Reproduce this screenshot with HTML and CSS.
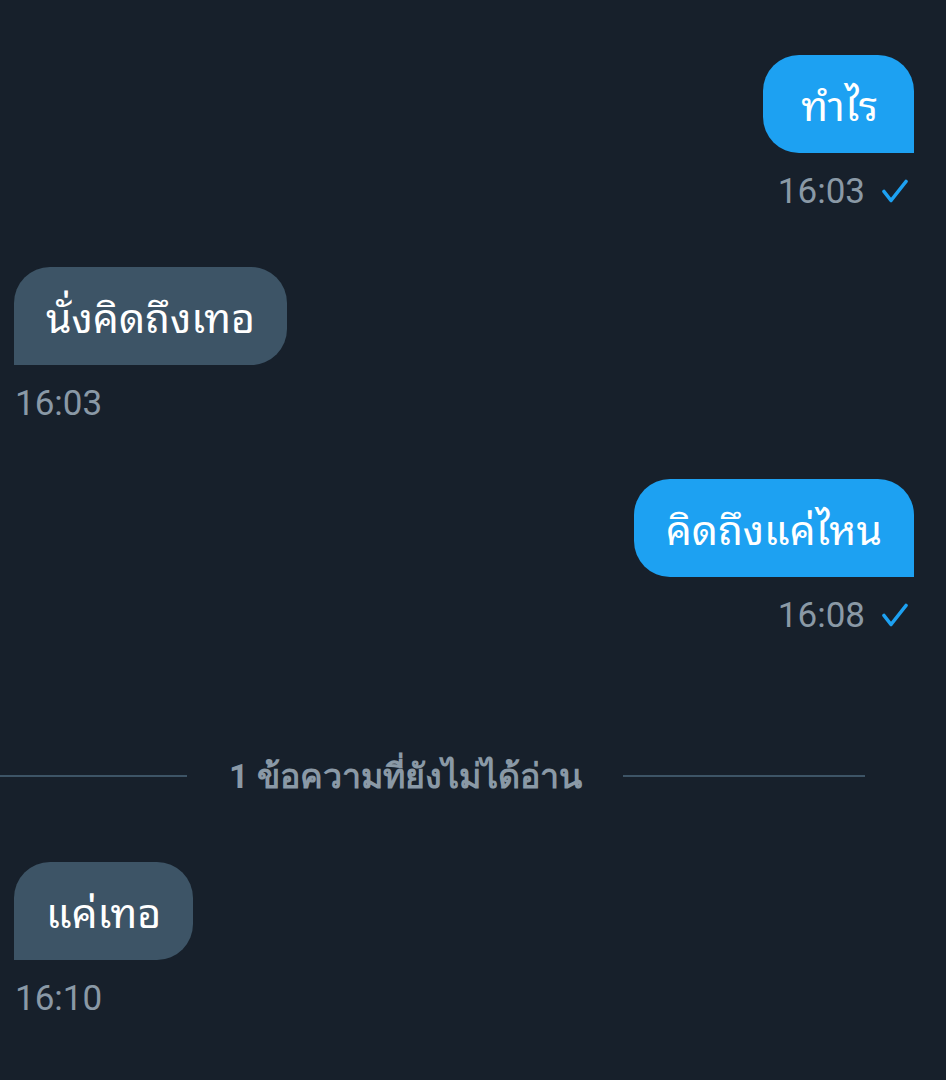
FILE: index.html
```html
<!DOCTYPE html>
<html lang="th">
<head>
<meta charset="utf-8">
<link rel="stylesheet" href="styles.css">
</head>
<body>
<main class="chat">
  <div class="msg sent first">
    <div class="bubble">ทำไร</div>
    <div class="meta"><span class="time">16:03</span><svg class="check" viewBox="0 0 28 26" width="28" height="26"><path d="M3 12.5 L10 21.5 L25 2.5" fill="none" stroke="#1da1f2" stroke-width="3.6" stroke-linecap="round" stroke-linejoin="round"/></svg></div>
  </div>
  <div class="msg recv">
    <div class="bubble">นั่งคิดถึงเทอ</div>
    <div class="meta"><span class="time">16:03</span></div>
  </div>
  <div class="msg sent">
    <div class="bubble">คิดถึงแค่ไหน</div>
    <div class="meta"><span class="time">16:08</span><svg class="check" viewBox="0 0 28 26" width="28" height="26"><path d="M3 12.5 L10 21.5 L25 2.5" fill="none" stroke="#1da1f2" stroke-width="3.6" stroke-linecap="round" stroke-linejoin="round"/></svg></div>
  </div>
  <div class="divider">
    <span class="line left"></span>
    <span class="label">1 ข้อความที่ยังไม่ได้อ่าน</span>
    <span class="line right"></span>
  </div>
  <div class="msg recv last">
    <div class="bubble">แค่เทอ</div>
    <div class="meta"><span class="time">16:10</span></div>
  </div>
</main>
</body>
</html>
```
FILE: styles.css
```css
html, body {
  margin: 0;
  padding: 0;
  background: #17202b;
}
body {
  width: 946px;
  height: 1080px;
  overflow: hidden;
  font-family: "Roboto", "Noto Sans", sans-serif;
}
.chat {
  display: flex;
  flex-direction: column;
  padding: 55px 32px 0 14px;
}
.msg {
  display: flex;
  flex-direction: column;
}
.msg.sent { align-items: flex-end; }
.msg.recv { align-items: flex-start; margin-top: 55px; }
.msg.sent:not(.first) { margin-top: 55px; }
.bubble {
  height: 98px;
  box-sizing: border-box;
  display: flex;
  align-items: center;
  padding: 0 32px 4px;
  font-family: "Noto Sans Thai Looped", "Loma", "Garuda", "Roboto", "Noto Sans", sans-serif;
  font-size: 41px;
  color: #ffffff;
  border-radius: 36px;
}
.sent.first .bubble { padding: 0 36px 4px 38px; }
.sent .bubble {
  background: #1da1f2;
  border-bottom-right-radius: 0;
}
.recv .bubble {
  background: #3d5466;
  border-bottom-left-radius: 0;
}
.meta {
  display: flex;
  align-items: center;
  gap: 16px;
  height: 40px;
  margin-top: 19px;
}
.sent .meta { margin-right: 5px; }
.recv .meta { margin-left: 1px; }
.time {
  font-size: 35px;
  color: #8a99a6;
  line-height: 40px;
}
.check { display: block; }
.divider {
  display: flex;
  align-items: center;
  margin: 120px 0 0 -14px;
  height: 40px;
}
.line {
  height: 2px;
  background: #3d5466;
}
.line.left { width: 187px; }
.line.right { width: 242px; }
.label {
  margin: 0 41px 0 42px;
  font-size: 34px;
  font-weight: bold;
  color: #8a99a6;
  white-space: nowrap;
}
.msg.last { margin-top: 66px; }
```
